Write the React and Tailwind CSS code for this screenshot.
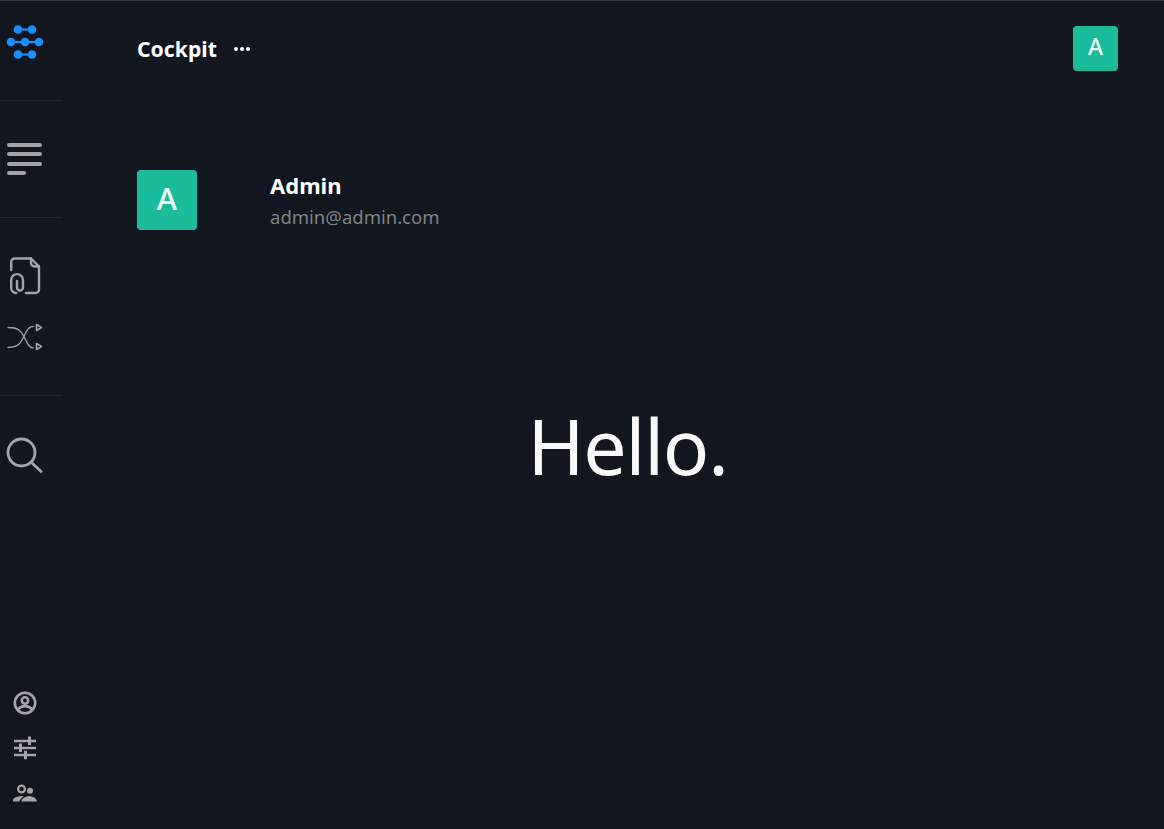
const font = { fontFamily: '"Noto Sans", sans-serif' };

function Logo() {
  return (
    <svg width="38" height="36" viewBox="0 0 38 36" fill="#1890ff" stroke="#1890ff">
      <line x1="12" y1="5.500" x2="26" y2="5.500" strokeWidth="2.200" />
      <line x1="5" y1="18" x2="33" y2="18" strokeWidth="2.200" />
      <line x1="12" y1="30.500" x2="26" y2="30.500" strokeWidth="2.200" />
      <circle cx="12" cy="5.500" r="4.300" stroke="none" />
      <circle cx="26" cy="5.500" r="4.300" stroke="none" />
      <circle cx="5" cy="18" r="4.300" stroke="none" />
      <circle cx="19" cy="18" r="4.300" stroke="none" />
      <circle cx="33" cy="18" r="4.300" stroke="none" />
      <circle cx="12" cy="30.500" r="4.300" stroke="none" />
      <circle cx="26" cy="30.500" r="4.300" stroke="none" />
    </svg>
  );
}

function Menu() {
  return (
    <svg width="36" height="34" viewBox="0 0 36 34" stroke="#a3a5a8" strokeWidth="4" strokeLinecap="round">
      <line x1="2" y1="3" x2="33" y2="3" />
      <line x1="2" y1="12" x2="33" y2="12" />
      <line x1="2" y1="22" x2="33" y2="22" />
      <line x1="2" y1="31" x2="17" y2="31" />
    </svg>
  );
}

function FileClip() {
  return (
    <svg width="32" height="38" viewBox="0 0 32 38" fill="none" stroke="#a3a5a8" strokeWidth="2.400" strokeLinecap="round" strokeLinejoin="round">
      <path d="M2.200 13V5a3.500 3.500 0 0 1 3.500-3.500H22L30 9.500V32.500a3.500 3.500 0 0 1-3.500 3.500H17" />
      <path d="M22 1.500V6a3.500 3.500 0 0 0 3.500 3.500H30" />
      <path d="M8 24V30.500a3 3 0 0 0 6 0V23a5.900 5.900 0 0 0-11.800 0V31a5 5 0 0 0 5 5" />
    </svg>
  );
}

function Shuffle() {
  return (
    <svg width="36" height="28" viewBox="0 0 36 28" fill="none" stroke="#a3a5a8" strokeWidth="1.300" strokeLinecap="round" strokeLinejoin="round">
      <path d="M1 4.500c10 0 13 3 16 9s5 11.500 9 11.500" />
      <path d="M1 24.500c11 0 13-5 16-11.500s5-9.500 9-9.500" />
      <path d="M29.500 1.500v6l5-3z" strokeWidth="1.600" />
      <path d="M29.500 20.500v6l5-3z" strokeWidth="1.600" />
    </svg>
  );
}

function Search() {
  return (
    <svg width="38" height="36" viewBox="0 0 38 36" fill="none" stroke="#a3a5a8" strokeWidth="2.800" strokeLinecap="round">
      <circle cx="15.500" cy="15.500" r="13.500" />
      <line x1="25.500" y1="25.500" x2="35" y2="34.500" />
    </svg>
  );
}

function UserCircle() {
  return (
    <svg width="24" height="24" viewBox="0 0 24 24" fill="none" stroke="#a3a5a8" strokeWidth="2.600">
      <circle cx="12" cy="12" r="10.200" />
      <circle cx="12" cy="9.500" r="3.200" />
      <path d="M4.800 18.500c2-2.400 4.700-3.400 7.200-3.400s5.200 1 7.200 3.400" />
    </svg>
  );
}

function Tune() {
  return (
    <svg width="24" height="24" viewBox="0 0 24 24" fill="#a3a5a8">
      <path d="M1 3.700h14v2.600H1zM18 3.700h5v2.600h-5zM15 .5h3v8.500h-3zM1 10.700h5v2.600H1zM9 10.700h14v2.600H9zM6 7.500h3v8.500H6zM1 17.700h10v2.600H1zM14 17.700h9v2.600h-9zM11 14.700h3v8.500h-3z" />
    </svg>
  );
}

function People() {
  return (
    <svg width="24" height="24" viewBox="0 0 24 24" fill="#a3a5a8">
      <circle cx="8.500" cy="8" r="3.400" fill="none" stroke="#a3a5a8" strokeWidth="2.200" />
      <circle cx="17" cy="9.700" r="3" />
      <path d="M0 20.500v-1c0-2.500 4-4.200 8-4.200 1 0 2 .1 3 .4-2.500 1-4 2.500-4.500 4.800zM8.500 20.500c.3-3.500 4.500-5.200 7.700-5.200s7.500 1.700 7.800 5.200z" />
    </svg>
  );
}

function Dots() {
  return (
    <svg width="16" height="6" viewBox="0 0 16 6" fill="#ffffff">
      <circle cx="2" cy="3" r="2" />
      <circle cx="8" cy="3" r="2" />
      <circle cx="14" cy="3" r="2" />
    </svg>
  );
}

export default function App() {
  return (
    <div className="flex h-[829px] w-[1164px] overflow-hidden border-t border-[#353a42] bg-[#12161f]" style={font}>
      <aside className="flex h-full w-[62px] shrink-0 flex-col">
        <div className="flex h-[100px] shrink-0 justify-center border-b border-[#22262e] pt-[23px] pr-[12px]">
          <div className="h-[36px]"><Logo /></div>
        </div>
        <div className="flex h-[117px] shrink-0 justify-center border-b border-[#22262e] pt-[41px] pr-[12px]">
          <div className="h-[34px]"><Menu /></div>
        </div>
        <div className="flex h-[178px] shrink-0 flex-col items-center border-b border-[#22262e] pt-[39px] pr-[12px]">
          <FileClip />
          <div className="mt-[28px]"><Shuffle /></div>
        </div>
        <div className="flex shrink-0 justify-center pt-[41px] pr-[12px]">
          <Search />
        </div>
        <div className="mt-auto flex flex-col items-center gap-[21px] pb-[24px] pr-[12px]">
          <UserCircle />
          <Tune />
          <People />
        </div>
      </aside>
      <main className="flex min-w-0 flex-1 flex-col pl-[75px] pr-[46px]">
        <header className="flex h-[94px] shrink-0 items-center justify-between">
          <div className="flex items-center gap-[17px] pt-[2px]">
            <span className="text-[21.200px] font-bold leading-none text-white">Cockpit</span>
            <Dots />
          </div>
          <div className="flex h-[45px] w-[45px] items-center justify-center rounded bg-[#1abc9c] pb-[4px] text-[23px] font-medium text-[#effaf7]">A</div>
        </header>
        <section className="mt-[75px] flex h-[60px] items-center gap-[73px]">
          <div className="flex h-[60px] w-[60px] items-center justify-center rounded bg-[#1abc9c] pb-[4px] text-[31px] font-medium text-[#f3fbf9]">A</div>
          <div className="flex flex-col pt-[2px]">
            <span className="text-[22px] font-bold leading-[28px] text-white">Admin</span>
            <span className="mt-[4px] text-[18.500px] leading-[28px] text-[#7f8287]">admin@admin.com</span>
          </div>
        </section>
        <h1 className="mt-[166px] text-center text-[77px] font-normal leading-[100px] tracking-[-1.200px] text-[#f8f9fa]">Hello.</h1>
      </main>
    </div>
  );
}
